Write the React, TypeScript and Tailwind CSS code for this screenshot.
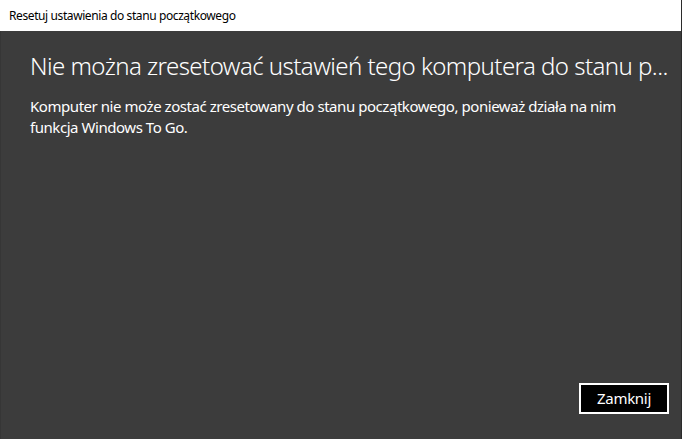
const App = () => {
  return (
    <div
      className="w-[682px] h-[439px] flex flex-col bg-[#3c3c3c] overflow-hidden"
      style={{ fontFamily: '"Noto Sans", "Open Sans", sans-serif' }}
    >
      <div className="h-[31px] bg-white flex items-center px-[9px] border-r border-[#2b2b2b]">
        <span className="text-[12px] text-black tracking-[-0.4px]">
          Resetuj ustawienia do stanu początkowego
        </span>
      </div>

      <div className="flex-1 flex flex-col border-l border-[#363636] border-r border-r-[#2b2b2b]">
        <div className="pl-[29px] pr-[12px] pt-[19px]">
          <div className="text-[24px] leading-[32px] font-light text-white whitespace-nowrap tracking-[-0.55px]">
            Nie można zresetować ustawień tego komputera do stanu p...
          </div>
          <p className="mt-[14px] text-[15px] leading-[21px] text-white tracking-[-0.45px]">
            Komputer nie może zostać zresetowany do stanu początkowego, ponieważ działa na nim
            <br />
            funkcja Windows To Go.
          </p>
        </div>

        <div className="mt-auto flex justify-end pr-[12px] pb-[25px]">
          <button className="w-[90px] h-[31px] border-2 border-white bg-black text-white text-[15px] tracking-[-0.3px]">
            Zamknij
          </button>
        </div>
      </div>
    </div>
  );
};

export default App;
